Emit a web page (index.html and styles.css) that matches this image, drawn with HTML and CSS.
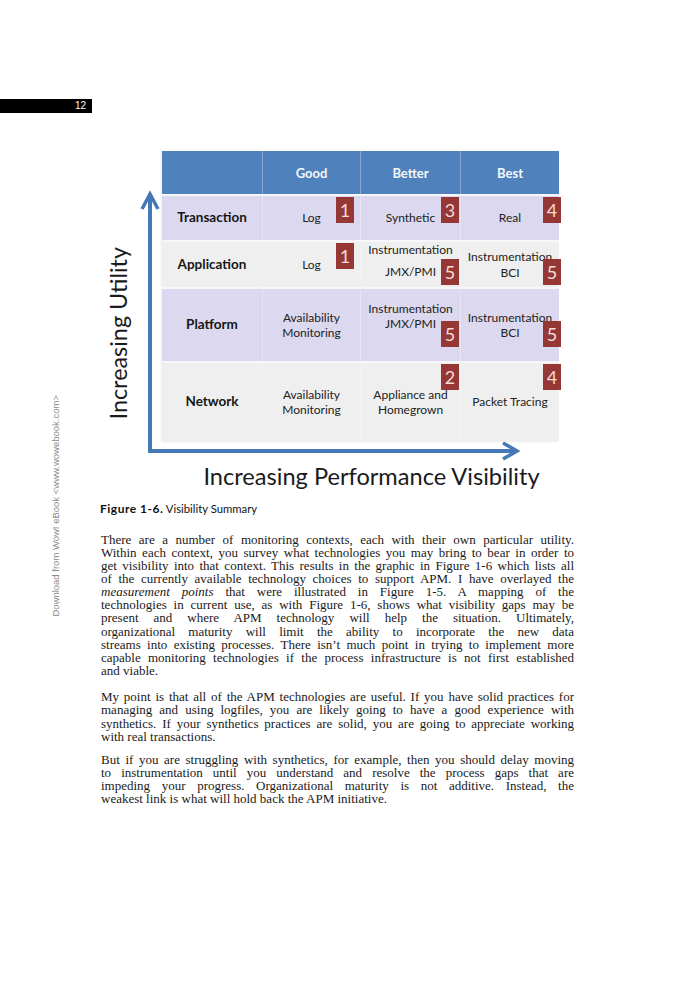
FILE: index.html
```html
<!DOCTYPE html>
<html lang="en">
<head>
<meta charset="utf-8">
<title>Visibility Summary</title>
<link rel="stylesheet" href="styles.css">
</head>
<body>
<div class="watermark">Download from Wow! eBook &lt;www.wowebook.com&gt;</div>
<div class="pagenum">12</div>

<div class="figure">
  <svg class="axes" width="700" height="380" viewBox="0 0 700 380">
    <line x1="150" y1="84" x2="150" y2="340" class="ax"/>
    <line x1="148" y1="338" x2="514" y2="338" class="ax"/>
    <polyline points="142,96 150,81 158,96" class="head"/>
    <polyline points="503,330 517,338 503,346" class="head"/>
  </svg>
  <div class="ylabel">Increasing Utility</div>

  <div class="grid">
    <div class="hd"></div>
    <div class="hd col">Good</div>
    <div class="hd col">Better</div>
    <div class="hd col">Best</div>

    <div class="cell purple label">Transaction</div>
    <div class="cell purple col good"><span>Log</span><span class="badge t3">1</span></div>
    <div class="cell purple col better"><span>Synthetic</span><span class="badge t3">3</span></div>
    <div class="cell purple col best"><span>Real</span><span class="badge t3">4</span></div>

    <div class="cell gray label">Application</div>
    <div class="cell gray col good"><span>Log</span><span class="badge t3">1</span></div>
    <div class="cell gray col better spread"><span>Instrumentation<br>JMX/PMI</span><span class="badge t19">5</span></div>
    <div class="cell gray col best"><span>Instrumentation<br>BCI</span><span class="badge t19">5</span></div>

    <div class="cell purple label">Platform</div>
    <div class="cell purple col good"><span>Availability<br>Monitoring</span></div>
    <div class="cell purple col better raised"><span>Instrumentation<br>JMX/PMI</span><span class="badge t34">5</span></div>
    <div class="cell purple col best"><span>Instrumentation<br>BCI</span><span class="badge t34">5</span></div>

    <div class="cell gray label">Network</div>
    <div class="cell gray col good"><span>Availability<br>Monitoring</span></div>
    <div class="cell gray col better"><span>Appliance and<br>Homegrown</span><span class="badge t3">2</span></div>
    <div class="cell gray col best"><span>Packet Tracing</span><span class="badge t3">4</span></div>
  </div>

  <div class="xlabel">Increasing Performance Visibility</div>
</div>

<p class="caption"><b>Figure 1-6.</b> Visibility Summary</p>

<p class="para">
  <span class="ln">There are a number of monitoring contexts, each with their own particular utility.</span>
  <span class="ln">Within each context, you survey what technologies you may bring to bear in order to</span>
  <span class="ln">get visibility into that context. This results in the graphic in Figure 1-6 which lists all</span>
  <span class="ln">of the currently available technology choices to support APM. I have overlayed the</span>
  <span class="ln"><em>measurement points</em> that were illustrated in Figure 1-5. A mapping of the</span>
  <span class="ln">technologies in current use, as with Figure 1-6, shows what visibility gaps may be</span>
  <span class="ln">present and where APM technology will help the situation. Ultimately,</span>
  <span class="ln">organizational maturity will limit the ability to incorporate the new data</span>
  <span class="ln">streams into existing processes. There isn’t much point in trying to implement more</span>
  <span class="ln">capable monitoring technologies if the process infrastructure is not first established</span>
  <span class="ln end">and viable.</span>
</p>

<p class="para p2">
  <span class="ln">My point is that all of the APM technologies are useful. If you have solid practices for</span>
  <span class="ln">managing and using logfiles, you are likely going to have a good experience with</span>
  <span class="ln">synthetics. If your synthetics practices are solid, you are going to appreciate working</span>
  <span class="ln end">with real transactions.</span>
</p>

<p class="para p3">
  <span class="ln">But if you are struggling with synthetics, for example, then you should delay moving</span>
  <span class="ln">to instrumentation until you understand and resolve the process gaps that are</span>
  <span class="ln">impeding your progress. Organizational maturity is not additive. Instead, the</span>
  <span class="ln end">weakest link is what will hold back the APM initiative.</span>
</p>
</body>
</html>
```

FILE: styles.css
```css
* { box-sizing: border-box; }

body {
  margin: 0;
  width: 700px;
  position: relative;
  background: #ffffff;
  color: #1a1a1a;
  font-family: "Liberation Serif", serif;
}

.watermark {
  position: absolute;
  left: 50px;
  top: 395px;
  writing-mode: vertical-rl;
  transform: rotate(180deg);
  font-family: "Liberation Sans", Arial, sans-serif;
  font-size: 9.5px;
  line-height: 11px;
  color: #8c8c8c;
  white-space: nowrap;
}

.pagenum {
  margin-top: 99px;
  width: 92px;
  height: 14px;
  background: #000;
  color: #fff;
  font-family: "Liberation Sans", Arial, sans-serif;
  font-size: 10px;
  line-height: 14px;
  text-align: right;
  padding-right: 6px;
}

/* ---------- figure ---------- */
.figure {
  position: relative;
  padding: 38px 0 0 162px;
  font-family: Lato, "Open Sans", sans-serif;
}

.axes {
  position: absolute;
  left: 0;
  top: 0;
  overflow: visible;
}
.axes .ax {
  stroke: #4678b6;
  stroke-width: 4;
}
.axes .head {
  fill: none;
  stroke: #4678b6;
  stroke-width: 3.5;
  stroke-linejoin: miter;
}

.ylabel {
  position: absolute;
  left: 104px;
  top: 134px;
  writing-mode: vertical-rl;
  transform: rotate(180deg);
  font-size: 23.4px;
  line-height: 28px;
  color: #1a1a1a;
  white-space: nowrap;
}

.grid {
  display: grid;
  grid-template-columns: 100px 98px 100px 99px;
  grid-template-rows: 43px 46px 47px 74px 80px;
  width: 397px;
  box-shadow: -1px 1px 2px rgba(0, 0, 0, 0.08);
}

.hd {
  background: #4f81bd;
  color: #f4f7fc;
  font-weight: 700;
  font-size: 13px;
  display: flex;
  align-items: center;
  justify-content: center;
}
.hd.col { border-left: 1px solid #86a6d3; }

.cell {
  position: relative;
  display: flex;
  align-items: center;
  justify-content: center;
  text-align: center;
  border-top: 2px solid #f7f7fa;
  font-size: 12px;
  line-height: 15.5px;
  color: #222;
}
.cell.purple { background: #dbd8ef; }
.cell.gray { background: #efefef; }
.cell.purple.col { border-left: 1px solid #e7e5f5; }
.cell.gray.col { border-left: 1px solid #f3f3f3; }

.cell.label {
  font-weight: 700;
  font-size: 13.5px;
  color: #161616;
}

.cell.spread { line-height: 22px; padding-bottom: 7px; }
.cell.raised { padding-bottom: 18px; }

.badge {
  position: absolute;
  width: 18px;
  height: 26px;
  background: #953735;
  color: #f3dcdb;
  font-size: 18px;
  line-height: 26px;
  text-align: center;
}
.good .badge { right: 6px; }
.better .badge { right: 1px; }
.best .badge { right: -2px; }
.badge.t3 { top: 1px; }
.badge.t19 { top: 17px; }
.badge.t34 { top: 32px; }

.xlabel {
  margin-top: 21px;
  width: 419px;
  text-align: center;
  font-size: 23.6px;
  line-height: 28px;
  color: #1a1a1a;
}

/* ---------- text ---------- */
.caption {
  margin: 11.5px 0 0 100px;
  font-family: Lato, "Open Sans", sans-serif;
  font-size: 11.3px;
  line-height: 14px;
  color: #111;
}
.caption b {
  font-weight: 700;
  font-size: 12px;
  letter-spacing: 0.5px;
}

.para {
  margin: 17px 126px 0 101px;
  font-size: 13px;
  line-height: 13.15px;
  text-align: justify;
  color: #1a1a1a;
}
.para.p2 { margin-top: 13px; }
.para.p3 { margin-top: 10px; }

.ln {
  display: block;
  text-align-last: justify;
}
.ln.end { text-align-last: left; }
```
